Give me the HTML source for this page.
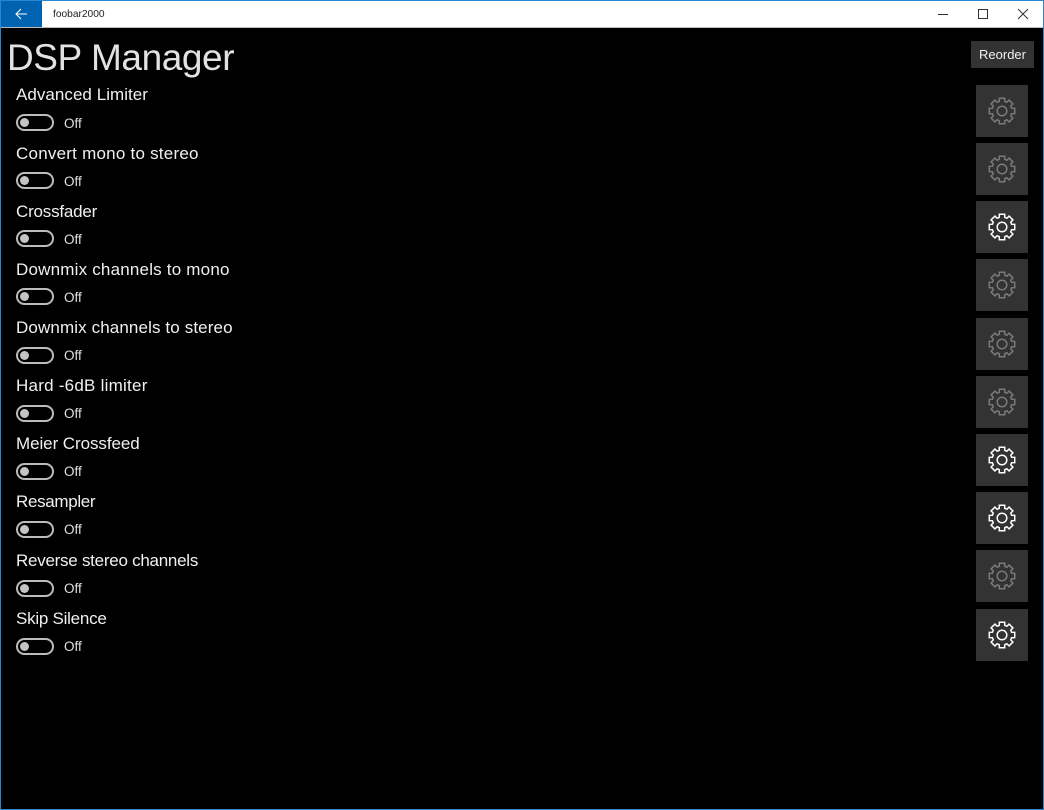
<!DOCTYPE html>
<html>
<head>
<meta charset="utf-8">
<style>
html,body{margin:0;padding:0;width:1044px;height:810px;overflow:hidden;background:#000;font-family:"Liberation Sans",sans-serif}
#frame{position:absolute;left:0;top:0;width:1044px;height:810px;background:#000}
.bl{position:absolute;background:#2b86d0}
#bar{position:absolute;left:1px;top:1px;width:1042px;height:26px;background:#fff}
#line{position:absolute;left:1px;top:27px;width:1042px;height:1px;background:#bbb}
#back{position:absolute;left:1px;top:1px;width:41px;height:26px;background:#0063b1}
#tt{position:absolute;left:53px;top:8px;font-size:10.2px;line-height:14px;color:#222;filter:blur(.25px)}
#h{position:absolute;left:7px;top:34px;font-size:37px;line-height:48px;color:#e2e2e2;white-space:nowrap;letter-spacing:-.42px;filter:blur(.3px)}
#re{position:absolute;left:971px;top:41px;width:63px;height:27px;background:#333;color:#f0f0f0;font-size:13px;line-height:28px;text-align:center}
.l{position:absolute;left:16px;font-size:17px;line-height:22px;color:#f0f0f0;white-space:nowrap;filter:blur(.25px)}
.s{position:absolute;left:16px;width:34px;height:13px;border:2px solid #bcbcbc;border-radius:9px;filter:blur(.3px)}
.s:after{content:"";position:absolute;left:2px;top:2px;width:9px;height:9px;border-radius:5px;background:#c4c4c4}
.o{position:absolute;left:64px;font-size:13.5px;line-height:17px;color:#e0e0e0;filter:blur(.2px)}
.b{position:absolute;left:976px;width:52px;height:52px;background:#333}
.b svg{position:absolute;left:0;top:0;fill:none;stroke:#7a7a7a;stroke-width:1.5;filter:blur(.25px)}
.b.e svg{stroke:#fff}
</style>
</head>
<body>
<div id="frame">
<div class="bl" style="left:0;top:0;width:1044px;height:1px"></div>
<div class="bl" style="left:0;top:0;width:1px;height:810px"></div>
<div class="bl" style="left:1043px;top:0;width:1px;height:810px"></div>
<div class="bl" style="left:0;top:809px;width:1044px;height:1px"></div>
<div id="bar"></div><div id="line"></div>
<div id="back"></div>
<svg style="position:absolute;left:15px;top:8px" width="13" height="12" viewBox="0 0 13 12" fill="none" stroke="#fff" stroke-width="1.1"><path d="M1 6H12M6 1L1 6L6 11"/></svg>
<div id="tt">foobar2000</div>
<svg style="position:absolute;left:936px;top:6px" width="96" height="16" viewBox="0 0 96 16" fill="none" stroke="#333" stroke-width="1"><path d="M2 8.5H12"/><rect x="42.5" y="3.5" width="9" height="9"/><path d="M82 3L92 13M92 3L82 13"/></svg>
<div id="h">DSP Manager</div>
<div id="re">Reorder</div>

<svg width="0" height="0" style="position:absolute"><defs><g id="g"><path d="M12.72 -2.7L12.72 2.7L9.61 2.76L8.75 4.85L10.9 7.08L7.08 10.9L4.85 8.75L2.76 9.61L2.7 12.72L-2.7 12.72L-2.76 9.61L-4.85 8.75L-7.08 10.9L-10.9 7.08L-8.75 4.85L-9.61 2.76L-12.72 2.7L-12.72 -2.7L-9.61 -2.76L-8.75 -4.85L-10.9 -7.08L-7.08 -10.9L-4.85 -8.75L-2.76 -9.61L-2.7 -12.72L2.7 -12.72L2.76 -9.61L4.85 -8.75L7.08 -10.9L10.9 -7.08L8.75 -4.85L9.61 -2.76Z"/><circle r="4.8"/></g></defs></svg>

<div class="l" style="top:84px;letter-spacing:.04px">Advanced Limiter</div><div class="s" style="top:114px"></div><div class="o" style="top:115px">Off</div>
<div class="l" style="top:143px;letter-spacing:.23px">Convert mono to stereo</div><div class="s" style="top:172px"></div><div class="o" style="top:173px">Off</div>
<div class="l" style="top:201px;letter-spacing:-.2px">Crossfader</div><div class="s" style="top:230px"></div><div class="o" style="top:231px">Off</div>
<div class="l" style="top:259px;letter-spacing:.2px">Downmix channels to mono</div><div class="s" style="top:288px"></div><div class="o" style="top:289px">Off</div>
<div class="l" style="top:317px;letter-spacing:.12px">Downmix channels to stereo</div><div class="s" style="top:347px"></div><div class="o" style="top:347px">Off</div>
<div class="l" style="top:375px;letter-spacing:.24px">Hard -6dB limiter</div><div class="s" style="top:405px"></div><div class="o" style="top:405px">Off</div>
<div class="l" style="top:433px;letter-spacing:-.07px">Meier Crossfeed</div><div class="s" style="top:463px"></div><div class="o" style="top:463px">Off</div>
<div class="l" style="top:491px;letter-spacing:-.33px">Resampler</div><div class="s" style="top:521px"></div><div class="o" style="top:521px">Off</div>
<div class="l" style="top:550px;letter-spacing:-.26px">Reverse stereo channels</div><div class="s" style="top:580px"></div><div class="o" style="top:580px">Off</div>
<div class="l" style="top:608px;letter-spacing:-.25px">Skip Silence</div><div class="s" style="top:638px"></div><div class="o" style="top:638px">Off</div>

<div class="b" style="top:85px"><svg width="52" height="52" viewBox="-26 -26 52 52"><use href="#g"/></svg></div>
<div class="b" style="top:143px"><svg width="52" height="52" viewBox="-26 -26 52 52"><use href="#g"/></svg></div>
<div class="b e" style="top:201px"><svg width="52" height="52" viewBox="-26 -26 52 52"><use href="#g"/></svg></div>
<div class="b" style="top:259px"><svg width="52" height="52" viewBox="-26 -26 52 52"><use href="#g"/></svg></div>
<div class="b" style="top:318px"><svg width="52" height="52" viewBox="-26 -26 52 52"><use href="#g"/></svg></div>
<div class="b" style="top:376px"><svg width="52" height="52" viewBox="-26 -26 52 52"><use href="#g"/></svg></div>
<div class="b e" style="top:434px"><svg width="52" height="52" viewBox="-26 -26 52 52"><use href="#g"/></svg></div>
<div class="b e" style="top:492px"><svg width="52" height="52" viewBox="-26 -26 52 52"><use href="#g"/></svg></div>
<div class="b" style="top:550px"><svg width="52" height="52" viewBox="-26 -26 52 52"><use href="#g"/></svg></div>
<div class="b e" style="top:609px"><svg width="52" height="52" viewBox="-26 -26 52 52"><use href="#g"/></svg></div>
</div>
</body>
</html>
